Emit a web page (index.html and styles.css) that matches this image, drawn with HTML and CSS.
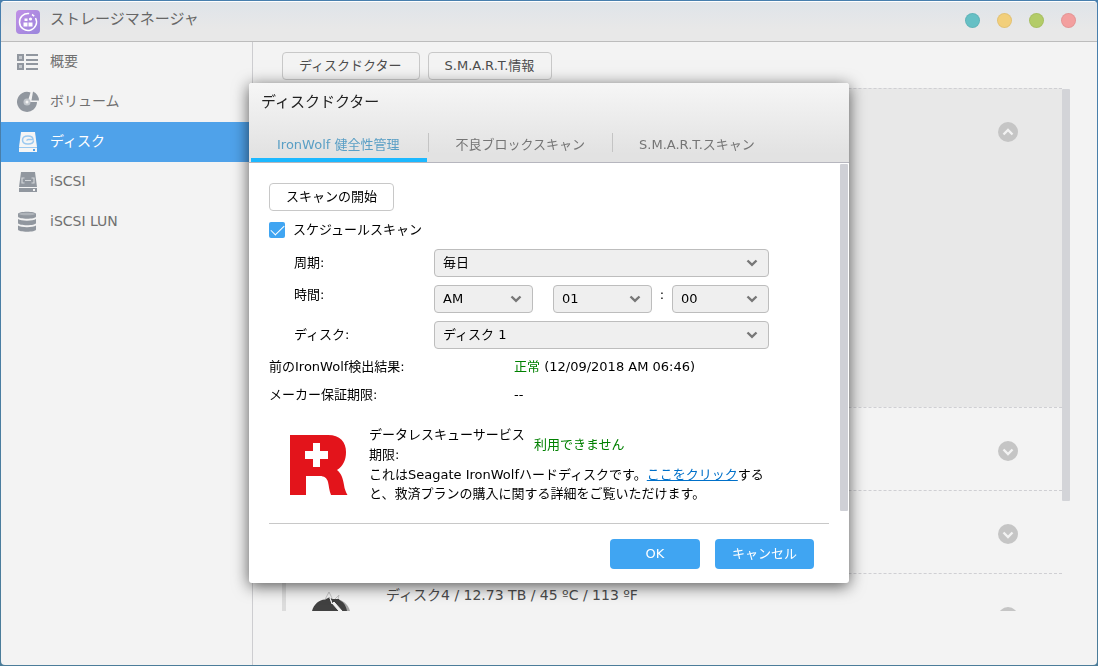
FILE: index.html
```html
<!DOCTYPE html>
<html lang="ja">
<head>
<meta charset="utf-8">
<title>ストレージマネージャ</title>
<link rel="stylesheet" href="styles.css">
</head>
<body>
<div class="window">
  <header class="titlebar">
    <svg class="app-icon" width="26" height="26" viewBox="0 0 26 26" aria-hidden="true">
      <defs><linearGradient id="purple" x1="0" y1="0" x2="1" y2="1"><stop offset="0" stop-color="#c08fe6"/><stop offset="1" stop-color="#9a86dc"/></linearGradient></defs>
      <rect x="1" y="1" width="24" height="24" rx="4" fill="url(#purple)"/>
      <path d="M14.200 4.600A8.500 8.500 0 1 0 20.500 9M17 5.500a9 9 0 0 1 2.200 1.800" fill="none" stroke="#fff" stroke-width="1.500"/>
      <path d="M9.500 9.500h3v2.500h-3zM8.500 13.500h4v4h-4zM13.500 13.500h4v4h-4z" fill="#fff"/>
      <circle cx="15.500" cy="10" r="1.600" fill="#fff"/>
    </svg>
    <h1 class="app-title">ストレージマネージャ</h1>
    <div class="window-controls">
      <button class="dot dot-teal" aria-label="ヘルプ"></button>
      <button class="dot dot-yellow" aria-label="最小化"></button>
      <button class="dot dot-green" aria-label="最大化"></button>
      <button class="dot dot-red" aria-label="閉じる"></button>
    </div>
  </header>
  <div class="main">
    <nav class="sidebar">
      <a class="nav-item" href="#overview">
        <svg width="22" height="22" viewBox="0 0 22 22" fill="none" stroke="#91979f" aria-hidden="true"><path d="M1 4h5v5H1zM1 13h5v5H1z" fill="#c3c7cc" stroke-width="2"/><path d="M9 4h12M9 9h12M9 13h12M9 18h12" stroke-width="2"/></svg>
        概要</a>
      <a class="nav-item" href="#volume">
        <svg width="22" height="22" viewBox="0 0 22 22" aria-hidden="true"><path d="M13.500 1.500A10 10 0 1 0 20 11h-7.500l-1-3z" fill="#91979f"/><path d="M16 .500A10.500 10.500 0 0 1 22 9.500h-7.500z" fill="#91979f"/><circle cx="10" cy="11" r="3.500" fill="#c3c7cc"/><circle cx="10" cy="11" r="1.500" fill="#f3f3f3"/></svg>
        ボリューム</a>
      <a class="nav-item active" href="#disk" aria-current="page">
        <svg width="22" height="22" viewBox="0 0 22 22" aria-hidden="true"><path d="M4 1h14l2 15H2z" fill="#f5f5f5"/><path d="M2 17h18v4H2z" fill="#f5f5f5"/><path d="M16.500 9.500c0 2.200-2.500 3.500-5.500 3.500s-5.500-1.500-5.500-4S8 5 11 5s5 1.500 5 3.500h-5l-1.500 1" fill="none" stroke="#9bc9f0" stroke-width="1.500"/><path d="M2 16.500h18" stroke="#9bc9f0"/><path d="M16 18h2v2h-2z" fill="#4fa2ea"/></svg>
        ディスク</a>
      <a class="nav-item" href="#iscsi">
        <svg width="22" height="22" viewBox="0 0 22 22" aria-hidden="true"><path d="M4 1h14l2 15H2zM2 17h18v4H2z" fill="#91979f"/><path d="M7.500 7H5v5h2.500M14.500 7H17v5h-2.500M8 9.500h6" fill="none" stroke="#d3d6d9" stroke-width="1.200"/><path d="M16 18h2v2h-2z" fill="#f3f3f3"/></svg>
        iSCSI</a>
      <a class="nav-item" href="#lun">
        <svg width="22" height="22" viewBox="0 0 22 22" fill="#91979f" aria-hidden="true"><path d="M1 3c0-3 18-3 18 0v2.500c0 3-18 3-18 0zM1 8c3 2.300 15 2.300 18 0v4c0 3-18 3-18 0zM1 14.500c3 2.300 15 2.300 18 0v4c0 3-18 3-18 0z"/><ellipse cx="10" cy="3" rx="8" ry="1.300" fill="#aeb3b9"/></svg>
        iSCSI LUN</a>
    </nav>
    <main class="content">
      <div class="toolbar">
        <button class="btn">ディスクドクター</button>
        <button class="btn">S.M.A.R.T.情報</button>
      </div>
      <div class="list-area">
        <ul class="disk-list">
          <li class="disk expanded">
            <button class="toggle" aria-label="折りたたむ"><svg width="20" height="20" viewBox="0 0 20 20"><path d="M5.500 12.500l4.500-4.500 4.500 4.500" fill="none" stroke="#f3f3f3" stroke-width="2.400"/></svg></button>
          </li>
          <li class="disk">
            <button class="toggle" aria-label="展開"><svg width="20" height="20" viewBox="0 0 20 20"><path d="M5.500 8.500l4.500 4.500 4.500-4.500" fill="none" stroke="#f3f3f3" stroke-width="2.400"/></svg></button>
          </li>
          <li class="disk">
            <button class="toggle" aria-label="展開"><svg width="20" height="20" viewBox="0 0 20 20"><path d="M5.500 8.500l4.500 4.500 4.500-4.500" fill="none" stroke="#f3f3f3" stroke-width="2.400"/></svg></button>
          </li>
          <li class="disk marked">
            <svg class="disk-logo" width="40" height="40" viewBox="0 0 40 40" aria-hidden="true">
              <path d="M24 8c7 1 12 5 14 12v6H26z" fill="#a5a5a5"/>
              <path d="M0 20C2 13 7 9 13 8.500l4-2 4 1.500 4 0c6 2 9 6 10 12v8H0z" fill="#414141"/>
              <path d="M13 8.500l4-7.500 3 6M23 8l4-4-1 4" fill="none" stroke="#c4c4c4"/>
              <path d="M18 7l2 6 2-2 8 9h-3l-7-8z" fill="#f3f3f3" stroke="#f3f3f3"/>
              <path d="M21 8l6 0 1 3-3 1z" fill="#414141"/>
            </svg>
            <span class="disk-name">ディスク4 / 12.73 TB / 45 ºC / 113 ºF</span>
            <button class="toggle" aria-label="展開"><svg width="20" height="20" viewBox="0 0 20 20"><path d="M5.500 8.500l4.500 4.500 4.500-4.500" fill="none" stroke="#f3f3f3" stroke-width="2.400"/></svg></button>
          </li>
        </ul>
        <div class="list-scroll"></div>
      </div>
    </main>
  </div>
</div>

<div class="overlay">
  <section class="dialog" role="dialog" aria-labelledby="dialog-title">
    <header class="dialog-head">
      <h2 class="dialog-title" id="dialog-title">ディスクドクター</h2>
      <div class="tabs" role="tablist">
        <button class="tab selected" role="tab" aria-selected="true">IronWolf 健全性管理</button>
        <span class="tab-sep"></span>
        <button class="tab" role="tab">不良ブロックスキャン</button>
        <span class="tab-sep"></span>
        <button class="tab" role="tab">S.M.A.R.T.スキャン</button>
      </div>
    </header>
    <div class="dialog-body">
      <div class="panel">
        <button class="btn btn-scan">スキャンの開始</button>
        <div class="check-row">
          <input class="check" type="checkbox" id="schedule" checked>
          <label for="schedule">スケジュールスキャン</label>
        </div>
        <div class="form">
          <label class="form-label" for="cycle">周期:</label>
          <div class="select"><select id="cycle"><option>毎日</option></select><svg class="caret" width="12" height="8" viewBox="0 0 12 8"><path d="M1.500 1.500L6 5.800l4.500-4.300"/></svg></div>
          <label class="form-label label-top" for="ampm">時間:</label>
          <div class="time">
            <div class="select"><select id="ampm"><option>AM</option></select><svg class="caret" width="12" height="8" viewBox="0 0 12 8"><path d="M1.500 1.500L6 5.800l4.500-4.300"/></svg></div>
            <span></span>
            <div class="select"><select aria-label="時"><option>01</option></select><svg class="caret" width="12" height="8" viewBox="0 0 12 8"><path d="M1.500 1.500L6 5.800l4.500-4.300"/></svg></div>
            <span class="colon">:</span>
            <div class="select"><select aria-label="分"><option>00</option></select><svg class="caret" width="12" height="8" viewBox="0 0 12 8"><path d="M1.500 1.500L6 5.800l4.500-4.300"/></svg></div>
          </div>
          <label class="form-label" for="disk-select">ディスク:</label>
          <div class="select"><select id="disk-select"><option>ディスク 1</option></select><svg class="caret" width="12" height="8" viewBox="0 0 12 8"><path d="M1.500 1.500L6 5.800l4.500-4.300"/></svg></div>
        </div>
        <dl class="facts">
          <dt>前のIronWolf検出結果:</dt>
          <dd><span class="good">正常</span> (12/09/2018 AM 06:46)</dd>
          <dt>メーカー保証期限:</dt>
          <dd>--</dd>
        </dl>
        <div class="rescue">
          <svg class="rescue-logo" width="58" height="61" viewBox="0 0 58 61" aria-hidden="true">
            <path d="M0 0h38c12 0 18 7 18 17 0 8-3 14-9 18 4 3 6 8 7 15 .500 4 2 7.500 3.500 10H41c-2-5-2-9-3-13-1-4-4-6-8-6H16v19H0z" fill="#e3141b"/>
            <path d="M23 8h7v8h8v8h-8v8h-7v-8h-8v-8h8z" fill="#fff"/>
          </svg>
          <div class="rescue-text">
            <div class="rescue-status">
              <span class="rescue-label">データレスキューサービス期限:</span>
              <span class="good">利用できません</span>
            </div>
            <p class="rescue-desc">これはSeagate IronWolfハードディスクです。<a href="#plan">ここをクリック</a>する<br>と、救済プランの購入に関する詳細をご覧いただけます。</p>
          </div>
        </div>
      </div>
      <div class="panel-scroll"></div>
    </div>
    <footer class="dialog-foot">
      <button class="btn-primary">OK</button>
      <button class="btn-primary">キャンセル</button>
    </footer>
  </section>
</div>
</body>
</html>
```
FILE: styles.css
```css
* { box-sizing: border-box; }

body {
  margin: 0;
  min-height: 100vh;
  display: flex;
  padding: 1px;
  background: linear-gradient(#487fae, #4b7c99);
  font: 13px/20px "DejaVu Sans", "Noto Sans CJK JP", sans-serif;
  color: #000;
}

button, select, input { font: inherit; color: inherit; margin: 0; }
button { cursor: pointer; }
h1, h2, p, ul, dl, dd { margin: 0; padding: 0; font-weight: 400; }

.window {
  flex: 1;
  display: flex;
  flex-direction: column;
  background: #f3f3f3;
  border-radius: 4px;
  overflow: hidden;
}

.titlebar {
  display: flex;
  align-items: center;
  gap: 9px;
  height: 41px;
  padding: 0 21px 0 14px;
  background: linear-gradient(#dfe4e9, #e8e8e8 70%);
  border-top: 1px solid #fff;
  border-bottom: 1px solid #bcbcbc;
}
.app-title { flex: 1; font-size: 15px; line-height: 20px; color: #666; padding-bottom: 5px; }
.window-controls { display: flex; gap: 17px; padding-bottom: 2px; }
.dot { width: 15px; height: 15px; padding: 0; border: 1px solid rgba(0, 0, 0, .06); border-radius: 50%; }
.dot-teal { background: #66c0c5; }
.dot-yellow { background: #f2cf7b; }
.dot-green { background: #b3cc68; }
.dot-red { background: #f39f9f; }

.main { flex: 1; display: flex; }

.sidebar { width: 252px; border-right: 1px solid #cdcdd0; }
.nav-item {
  display: flex;
  align-items: center;
  gap: 11px;
  height: 40px;
  padding: 0 0 2px 16px;
  font-size: 14px;
  color: #707070;
  text-decoration: none;
}
.nav-item svg { margin-top: 2px; }
.nav-item.active { background: #4fa2ea; color: #fff; }

.content { flex: 1; display: flex; flex-direction: column; padding: 10px 27px 54px 29px; }
.toolbar { display: flex; gap: 8px; margin-bottom: 8px; }

.btn {
  height: 28px;
  padding: 0 16px;
  border: 1px solid #c8c8c8;
  border-radius: 4px;
  background: transparent;
  color: #4c4c4c;
  line-height: 20px;
}
.toolbar .btn { padding: 0 17px 1px 16px; }
.btn-scan { color: #000; }

.list-area { flex: 1 1 0; display: flex; overflow: hidden; }
.disk-list { flex: 1; list-style: none; height: 523px; overflow: hidden; }
.disk {
  display: flex;
  align-items: flex-start;
  height: 83px;
  padding: 33px 44px 0 0;
  border-top: 1px dashed #cfcfd3;
}
.disk.expanded { height: 319px; background: #e8e8e8; }
.disk.marked { padding-top: 0; border-left: 4px solid #dcdcdc; }
.disk.marked .toggle { margin-top: 33px; }
.disk-logo { margin: 17px 34px 0 26px; }
.disk-name { margin-top: 11px; font-size: 14px; color: #4c4c4c; }
.toggle { width: 20px; height: 20px; margin-left: auto; padding: 0; border: 0; border-radius: 50%; background: #c5c5c5; }
.toggle svg { display: block; }
.list-scroll { width: 8px; height: 412px; margin-top: 1px; background: #d3d4d8; border-radius: 1px; }

.overlay { position: fixed; inset: 0; display: grid; place-items: center; }
.dialog {
  width: 600px;
  max-width: 100%;
  background: #fff;
  border-radius: 3px;
  overflow: hidden;
  box-shadow: 0 3px 16px rgba(0, 0, 0, .65);
}
.dialog-head { background: linear-gradient(#f6f6f6, #e2e2e2 90%); border-bottom: 1px solid #b6b6be; }
.dialog-title { padding-left: 12px; font-size: 15px; line-height: 38px; color: #222; }
.tabs { display: flex; padding-left: 2px; }
.tab {
  padding: 14px 26px 3px;
  border: 0;
  border-bottom: 4px solid transparent;
  background: none;
  color: #757575;
  line-height: 20px;
}
.tab.selected { padding-right: 28px; color: #5a9fc5; border-bottom-color: #1cb8ff; }
.tab-sep { width: 1px; height: 19px; margin: 12px 0 0 1px; background: #c4c4c4; }

.dialog-body { display: flex; padding: 1px 1px 0 0; }
.panel { flex: 1; padding: 19px 20px 8px; }
.panel-scroll { width: 8px; background: #cfd0d6; border-radius: 1px; }

.check-row { display: flex; align-items: center; gap: 8px; margin: 9px 0; }
.check {
  appearance: none;
  display: grid;
  place-items: center;
  width: 16px;
  height: 16px;
  border-radius: 2px;
  background: #40a5f2;
}
.check:checked::before {
  content: "";
  width: 12px;
  height: 6px;
  margin-bottom: 4px;
  border: solid #fff;
  border-width: 0 0 1px 1px;
  transform: rotate(-45deg);
}

.form { display: grid; grid-template-columns: 165px 335px; row-gap: 8px; align-items: center; }
.form-label { padding-left: 25px; }
.label-top { align-self: start; }
.select { display: grid; align-items: center; }
.select select, .caret { grid-area: 1 / 1; }
.select select {
  appearance: none;
  width: 100%;
  height: 28px;
  padding: 0 24px 0 8px;
  border: 1px solid #bdbdbd;
  border-radius: 4px;
  background: #efefef;
}
.caret { justify-self: end; margin-right: 11px; pointer-events: none; }
.caret path { fill: none; stroke: #777; stroke-width: 2.4; }
.time { display: grid; grid-template-columns: 99px 20px 99px 20px 97px; }
.colon { text-align: center; }

.facts { display: grid; grid-template-columns: 245px 1fr; row-gap: 8px; margin-top: 8px; }
.good { color: #008000; }

.rescue { display: flex; margin-top: 20px; }
.rescue-logo { flex: none; margin: 10px 21px 0; }
.rescue-text { flex: 1; }
.rescue-status { display: flex; align-items: center; gap: 8px; }
.rescue-label { width: 157px; }
.rescue-desc { line-height: 19px; white-space: nowrap; }
.rescue-desc a { color: #0070c9; }

.dialog-foot {
  display: flex;
  justify-content: flex-end;
  gap: 15px;
  margin: 12px 20px 0;
  padding: 15px 15px 14px;
  border-top: 1px solid #c8c8c8;
}
.btn-primary {
  min-width: 90px;
  height: 30px;
  padding: 0 17px;
  border: 0;
  border-radius: 4px;
  background: #40a5f2;
  color: #fff;
}
```
